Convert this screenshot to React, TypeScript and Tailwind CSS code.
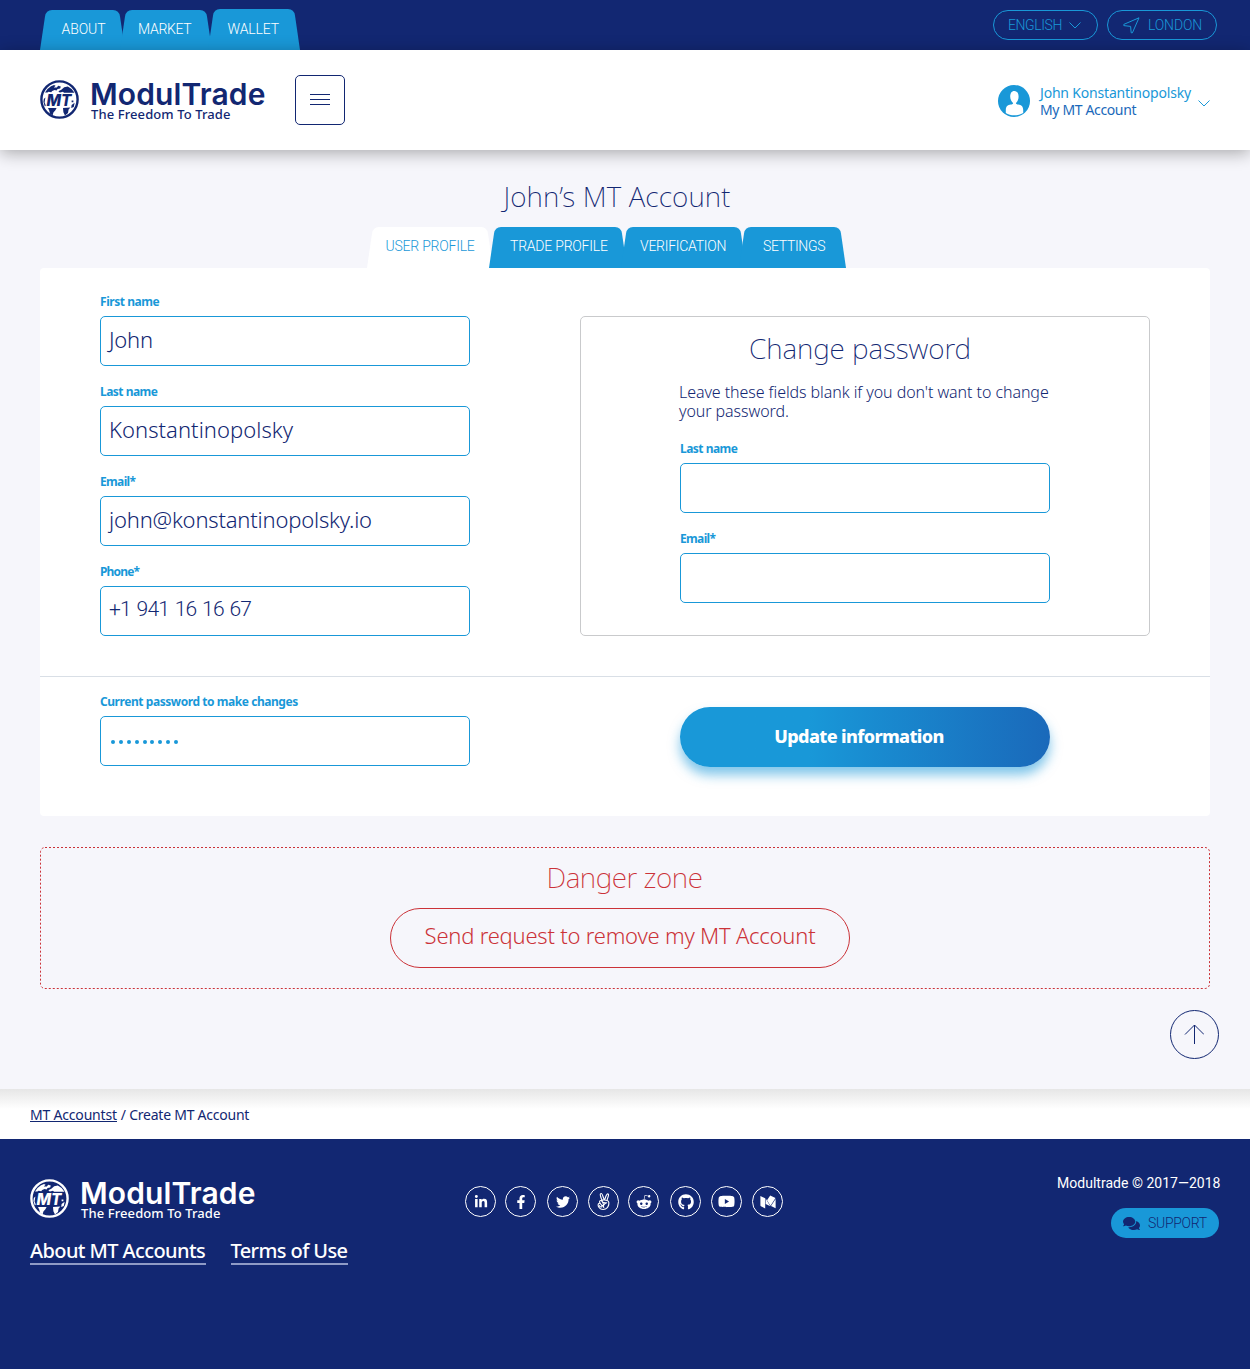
import type { ReactNode } from "react";
import {
  FaAngellist,
  FaComments,
  FaFacebookF,
  FaGithub,
  FaLinkedinIn,
  FaRedditAlien,
  FaTwitter,
  FaYoutube,
} from "react-icons/fa";

function Globe() {
  return (
    <svg viewBox="0 0 39 39" className="size-[39px] shrink-0" fill="none">
      <circle cx="19.5" cy="19.5" r="18.1" stroke="currentColor" strokeWidth="2.4" />
      <g fill="currentColor">
        <path d="M5 12.5 7.5 9 11 6.2 14 5l1.6.8-1.8 1.6 3 .2 1.4-1.8 2.6.8-.6 1.8-2.6.6-1 1.4-2-.4-2.4 1-1 1.2-2.6-.4L7.4 12.5z" />
        <path d="M21 10 24.2 7.2 27.8 6.6 31.6 9 34.5 12.8H24l-1-1-3 .8-1.6-.8 1.2-1.2z" />
        <path d="M8 28H16.6L15.4 30.2 13.4 32.4 12.6 35.4 10 33.8 9.2 30.6z" />
        <path d="M23 28 30.4 27.4 28.6 29.6 28 33 25 35.6 23.4 32.2z" />
        <path d="M31.6 20.5h1.8v1.8h-1.8zM31.6 25l3-2.2-.8 4.2-2.6 1z" />
        <path d="M3.8 19 5.4 17.6 4.6 22.4 5.8 25.6 4.8 26.4 3.4 22z" />
      </g>
      <text
        x="6.5"
        y="25.5"
        textLength="25"
        lengthAdjust="spacingAndGlyphs"
        fill="currentColor"
        className="font-['Inter'] text-[15.5px] font-extrabold italic"
      >
        MT
      </text>
    </svg>
  );
}

function Logo() {
  return (
    <a className="flex h-[39px] items-start gap-[11px]">
      <Globe />
      <span className="flex flex-col">
        <span className="h-[26px] font-['Inter'] text-[30px] leading-[28px] font-semibold tracking-[0.12px] whitespace-nowrap">
          ModulTrade
        </span>
        <span className="ml-px text-[13px] leading-4 font-medium tracking-[0.1px] whitespace-nowrap">
          The Freedom To Trade
        </span>
      </span>
    </a>
  );
}

function Tab({
  width,
  height = 40,
  className,
  textClass,
  children,
}: {
  width: number;
  height?: number;
  className: string;
  textClass: string;
  children: ReactNode;
}) {
  const h = height;
  const w = width;
  return (
    <a className={`relative block shrink-0 ${className}`}>
      <svg viewBox={`0 0 ${w} ${h}`} className="absolute inset-0 size-full" fill="currentColor">
        <path
          d={`M0 ${h} L5 6.5 Q6 0 12 0 H${w - 12} Q${w - 6} 0 ${w - 5} 6.5 L${w} ${h} Z`}
        />
      </svg>
      <span
        className={`relative block font-['Roboto'] text-sm leading-[38px] font-[350] whitespace-nowrap ${textClass}`}
      >
        {children}
      </span>
    </a>
  );
}

function Field({
  label,
  labelClass = "tracking-[-0.44px]",
  children,
}: {
  label: string;
  labelClass?: string;
  children?: ReactNode;
}) {
  return (
    <label className="block w-[370px]">
      <span
        className={`block h-[23px] pt-px text-xs leading-4 font-bold whitespace-nowrap text-[#1998d8] ${labelClass}`}
      >
        {label}
      </span>
      <span className="flex h-[50px] items-center rounded-[5px] border border-[#1998d8] bg-white px-2 pb-1 text-[22px] font-light whitespace-nowrap">
        {children}
      </span>
    </label>
  );
}

function Chevron({ className }: { className: string }) {
  return (
    <svg viewBox="0 0 12 7" className={className} fill="none" stroke="currentColor">
      <path d="M.5.5 6 6 11.5.5" />
    </svg>
  );
}

function MediumMark() {
  return (
    <svg viewBox="0 0 16 14" className="h-[14px] w-4" fill="currentColor">
      <path d="M.4.9 5.2 3.2V13.4L.9 11.2Q.4 10.9.4 10.3Z" />
      <path d="M5.7 3.6 10.3 11.2 5.7 8.9Z" />
      <path d="M10.2.5 15.5 3 10.5 10.8 7 5.2Z" />
      <path d="M15.6 4V13.2L11 11Z" />
    </svg>
  );
}

function Social({ className = "", children }: { className?: string; children: ReactNode }) {
  return (
    <a
      className={`flex size-[31px] shrink-0 items-center justify-center rounded-full border border-white ${className}`}
    >
      {children}
    </a>
  );
}

function TopBar() {
  return (
    <div className="flex h-[50px] justify-between bg-[#122772] pr-[33px] pl-10">
      <nav className="flex items-end text-[#1998d8]">
        <Tab width={85} className="h-10 w-[85px]" textClass="pl-[21.5px] tracking-[-0.1px] text-white">
          ABOUT
        </Tab>
        <Tab
          width={92}
          className="-ml-[5px] h-10 w-[92px]"
          textClass="pl-[18px] tracking-[-0.3px] text-white"
        >
          MARKET
        </Tab>
        <Tab
          width={92}
          height={41}
          className="-ml-1 h-[41px] w-[92px]"
          textClass="pt-px pl-[19.5px] tracking-[-0.1px] text-white"
        >
          WALLET
        </Tab>
      </nav>
      <div className="flex gap-[9px] pt-2.5 font-['Roboto'] text-sm font-light text-[#1998d8]">
        <a className="flex h-[30px] w-[105px] items-center rounded-full border border-[#1998d8] pl-3.5">
          <span className="w-[61px] tracking-[-0.42px]">ENGLISH</span>
          <Chevron className="h-[7px] w-3" />
        </a>
        <a className="flex h-[30px] w-[110px] items-center rounded-full border border-[#1998d8] pl-[15px]">
          <svg viewBox="0 0 17 17" className="size-[17px]" fill="none" stroke="currentColor" strokeLinejoin="round">
            <path d="M16 .8.8 7.4v1.2l6.8.8.6 6.4h1.2Z" />
          </svg>
          <span className="ml-2 tracking-[-0.15px]">LONDON</span>
        </a>
      </div>
    </div>
  );
}

function Header() {
  return (
    <header className="relative z-10 flex h-[100px] justify-between bg-white pr-10 pl-10 shadow-[0_3px_16px_rgba(0,0,0,0.32)]">
      <div className="flex">
        <div className="mt-[30px] w-[255px]">
          <Logo />
        </div>
        <button className="mt-[25px] flex size-[50px] flex-col items-center justify-center gap-1 rounded-[5px] border border-[#122772] pb-px">
          <span className="h-px w-5 bg-[#122772]" />
          <span className="h-px w-5 bg-[#122772]" />
          <span className="h-px w-5 bg-[#122772]" />
        </button>
      </div>
      <div className="flex h-8 pt-[35px]">
        <svg viewBox="0 0 32 32" className="size-8 shrink-0">
          <circle cx="16" cy="16" r="16" fill="#1998d8" />
          <path
            d="M16.3 6c2.8 0 4.3 2.4 4.3 5.7 0 2.8-1.4 5.3-2.7 6.3 0 1 .8 1.4 2.3 1.6 3.200.5 5 1.9 5 5.4v3c-2.4 1.500-5.600 2.300-8.800 2.300s-6.400-.8-8.600-2.300v-3c0-3.500 1.800-4.900 5-5.400 1.500-.2 2.300-.6 2.300-1.600-1.300-1-2.900-3.500-2.900-6.300C12.200 8.400 13.500 6 16.300 6Z"
            fill="#fff"
          />
        </svg>
        <div className="-mt-px ml-2.5 w-[158px] text-sm leading-[17px] whitespace-nowrap">
          <div className="tracking-[-0.19px] text-[#1998d8]">John Konstantinopolsky</div>
          <div className="tracking-[-0.36px] text-[#1a69ba]">My MT Account</div>
        </div>
        <Chevron className="mt-[15px] h-[7px] w-3 shrink-0 text-[#1998d8]" />
      </div>
    </header>
  );
}

function Account() {
  return (
    <main className="h-[939px] bg-[#f6f6fb] px-10 pt-7">
      <h1 className="h-[49px] pr-4 text-center text-[28px] leading-9 font-extralight tracking-[0.12px]">
        John’s MT Account
      </h1>
      <nav className="flex pl-[327px] text-[#1998d8]">
        <Tab
          width={126}
          height={41}
          className="h-[41px] w-[126px] text-white"
          textClass="pl-[18.5px] tracking-[-0.22px] text-[#1998d8]"
        >
          USER PROFILE
        </Tab>
        <Tab
          width={138}
          height={41}
          className="-ml-1 h-[41px] w-[138px]"
          textClass="pl-[21px] tracking-[-0.22px] text-white"
        >
          TRADE PROFILE
        </Tab>
        <Tab
          width={125}
          height={41}
          className="-ml-1.5 h-[41px] w-[125px]"
          textClass="pl-[19px] tracking-[-0.26px] text-white"
        >
          VERIFICATION
        </Tab>
        <Tab
          width={107}
          height={41}
          className="-ml-[7px] h-[41px] w-[107px]"
          textClass="pl-6 tracking-[-0.32px] text-white"
        >
          SETTINGS
        </Tab>
      </nav>

      <section className="h-[548px] rounded-[4px] bg-white">
        <div className="flex h-[409px] justify-between border-b border-[#d9dfe6] px-[60px] pt-[25px]">
          <div className="flex flex-col gap-[17px]">
            <Field label="First name">
              <span className="tracking-[-0.25px]">John</span>
            </Field>
            <Field label="Last name" labelClass="tracking-[-0.52px]">
              <span className="tracking-[0.05px]">Konstantinopolsky</span>
            </Field>
            <Field label="Email*" labelClass="tracking-[-0.66px]">
              <span className="tracking-[-0.19px]">john@konstantinopolsky.io</span>
            </Field>
            <Field label="Phone*" labelClass="tracking-[-0.84px]">
              <span className="pt-0.5 font-['Roboto'] text-[21px] tracking-[-0.85px] [word-spacing:1.5px]">
                +1 941 16 16 67
              </span>
            </Field>
          </div>
          <div className="mt-[23px] h-80 w-[570px] rounded-[5px] border border-[#c9cacc] px-[99px] pt-[13px]">
            <h2 className="h-[53px] pr-2.5 text-center text-[28px] leading-9 font-extralight tracking-[-0.09px]">
              Change password
            </h2>
            <p className="-ml-px h-[57px] text-base leading-[19px] font-light tracking-[-0.07px] whitespace-nowrap">
              Leave these fields blank if you don't want to change
              <br />
              your password.
            </p>
            <div className="flex flex-col gap-[17px]">
              <Field label="Last name" labelClass="tracking-[-0.52px]" />
              <Field label="Email*" labelClass="tracking-[-0.66px]" />
            </div>
          </div>
        </div>
        <div className="flex justify-between pr-40 pl-[60px]">
          <div className="pt-4">
            <Field label="Current password to make changes">
              <span className="ml-0.5 flex gap-[3.9px] pt-1.5">
                {Array.from({ length: 9 }, (_, i) => (
                  <span key={i} className="size-1 rounded-full bg-[#1998d8]" />
                ))}
              </span>
            </Field>
          </div>
          <button className="mt-[30px] flex h-[60px] w-[370px] items-center justify-center rounded-full bg-linear-to-r from-[#1998d8] from-35% to-[#1a69ba] pr-3 pb-0.5 text-lg font-extrabold tracking-[-0.64px] text-white shadow-[0_8px_12px_rgba(25,152,216,0.55)]">
            Update information
          </button>
        </div>
      </section>

      <section className="relative mt-[31px] flex h-[142px] flex-col items-center text-[#cb3238]">
        <svg className="absolute inset-0 size-full" fill="none" stroke="currentColor">
          <rect x=".5" y=".5" width="1169" height="141" rx="4.5" strokeDasharray="2 2" />
        </svg>
        <h2 className="mt-3 h-[49px] pr-px text-[28px] leading-9 font-extralight tracking-[-0.45px]">
          Danger zone
        </h2>
        <button className="mr-2.5 flex h-[60px] w-[460px] items-center justify-center rounded-full border border-current pb-1.5 text-[22px] font-light tracking-[-0.22px]">
          Send request to remove my MT Account
        </button>
      </section>

      <div className="-mr-[9px] mt-[21px] flex justify-end">
        <button className="flex size-[49px] items-center justify-center rounded-full border border-[#122772] pr-px pb-px">
          <svg viewBox="0 0 20 20" className="size-5" fill="none" stroke="currentColor">
            <path d="M10.5 20V1M1 10.5 10.5 1 20 10.5" />
          </svg>
        </button>
      </div>
    </main>
  );
}

function Footer() {
  return (
    <footer className="flex h-[230px] justify-between bg-[#122772] pr-[29.5px] pl-[30px] text-white">
      <div className="w-[435px] pt-10">
        <Logo />
        <div className="mt-[19px] flex gap-[25px] text-xl leading-7 font-medium whitespace-nowrap">
          <a className="h-7 w-[175.5px] border-b-2 border-[#8f9bc6] tracking-[-0.6px]">
            About MT Accounts
          </a>
          <a className="h-7 w-[117.5px] border-b-2 border-[#8f9bc6] tracking-[-0.6px]">
            Terms of Use
          </a>
        </div>
      </div>
      <div className="flex flex-1 pt-[47px] text-sm">
        <Social>
          <FaLinkedinIn />
        </Social>
        <Social className="ml-[9px]">
          <FaFacebookF />
        </Social>
        <Social className="ml-[11px]">
          <FaTwitter />
        </Social>
        <Social className="ml-2.5">
          <FaAngellist className="text-[17px]" />
        </Social>
        <Social className="ml-[9px]">
          <FaRedditAlien className="text-base" />
        </Social>
        <Social className="ml-[11px]">
          <FaGithub className="text-base" />
        </Social>
        <Social className="ml-2.5">
          <FaYoutube className="text-[17px]" />
        </Social>
        <Social className="ml-2.5">
          <MediumMark />
        </Social>
      </div>
      <div className="flex flex-col items-end pt-[34px] text-sm">
        <div className="h-[35px] font-['Roboto'] leading-5 tracking-[0.02px] whitespace-nowrap">
          Modultrade © 2017—2018
        </div>
        <a className="mr-[1.5px] flex h-[30px] w-[108px] items-center rounded-full bg-[#1998d8] pl-3 font-['Roboto'] font-light text-[#122772]">
          <FaComments className="text-[17px]" />
          <span className="ml-2 tracking-[-0.3px]">SUPPORT</span>
        </a>
      </div>
    </footer>
  );
}

export default function App() {
  return (
    <div className="w-[1250px] bg-[#122772] font-['Noto_Sans',sans-serif] text-[#122772]">
      <TopBar />
      <Header />
      <Account />
      <div className="flex h-[50px] bg-white bg-linear-to-b from-[#e6e6e6] to-white to-40% pt-4 pl-[30px] text-sm leading-5 whitespace-nowrap">
        <a className="h-[17px] border-b border-[#122772] tracking-[-0.19px]">MT Accountst</a>
        <span className="ml-1 tracking-[-0.24px]">/ Create MT Account</span>
      </div>
      <Footer />
    </div>
  );
}
